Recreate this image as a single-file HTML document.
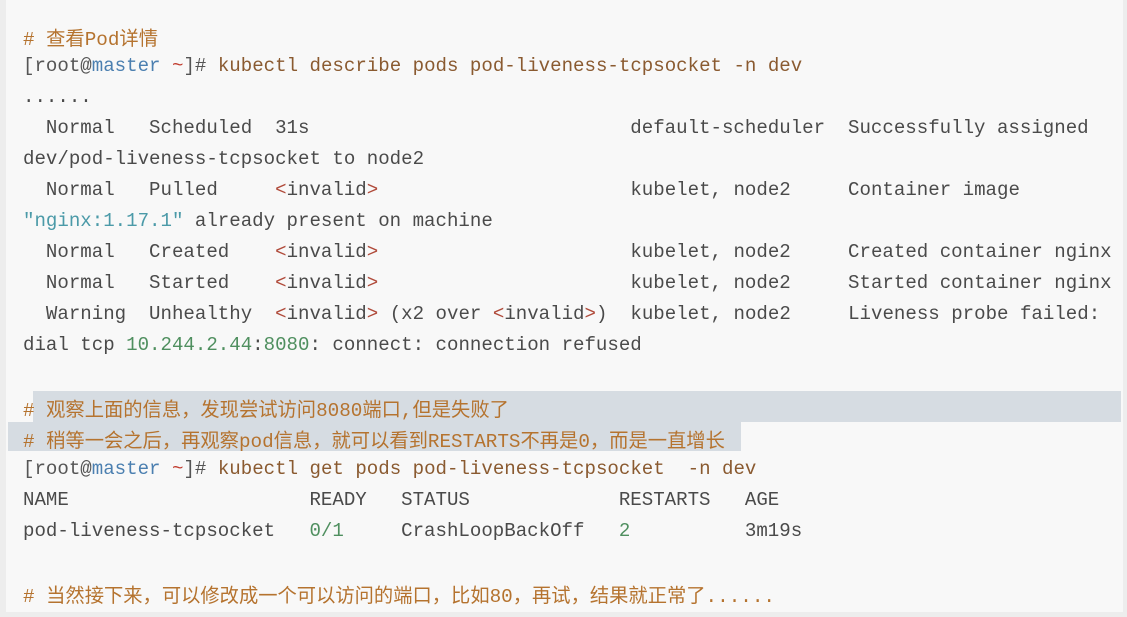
<!DOCTYPE html>
<html><head><meta charset="utf-8"><style>
html,body{margin:0;padding:0;}
body{width:1127px;height:617px;background:#ededed;overflow:hidden;position:relative;}
#panel{position:absolute;left:6px;top:0;width:1117px;height:612px;background:#f8f8f8;}
.hl{position:absolute;background:#d6dce2;}
.l{position:absolute;left:23px;white-space:pre;font-family:"Liberation Mono",monospace;font-size:19.1px;color:#4a4a4a;}
.c{color:#b5732f;font-family:"Liberation Mono","Noto Sans CJK SC",monospace;font-size:19.3px;}
.p{color:#555;}
.m{color:#4b7fb0;}
.t{color:#c0392b;}
.k{color:#8a5a30;}
.s{color:#4b9aa8;}
.n{color:#4f8f5f;}
.r{color:#b04a3a;}
</style></head><body>
<div id="panel"></div>
<div class="hl" style="left:33px;top:391px;width:1088px;height:31px"></div>
<div class="hl" style="left:8px;top:422px;width:733px;height:29px"></div>
<div class="l c" style="top:23px"># 查看Pod详情</div>
<div class="l" style="top:55px"><span class="p">[root@</span><span class="m">master</span> <span class="t">~</span><span class="p">]#</span> <span class="k">kubectl describe pods pod-liveness-tcpsocket -n dev</span></div>
<div class="l" style="top:86px">......</div>
<div class="l" style="top:117px">  Normal   Scheduled  31s                            default-scheduler  Successfully assigned</div>
<div class="l" style="top:148px">dev/pod-liveness-tcpsocket to node2</div>
<div class="l" style="top:179px">  Normal   Pulled     <span class="r">&lt;</span>invalid<span class="r">&gt;</span>                      kubelet, node2     Container image</div>
<div class="l" style="top:210px"><span class="s">"nginx:1.17.1"</span> already present on machine</div>
<div class="l" style="top:241px">  Normal   Created    <span class="r">&lt;</span>invalid<span class="r">&gt;</span>                      kubelet, node2     Created container nginx</div>
<div class="l" style="top:272px">  Normal   Started    <span class="r">&lt;</span>invalid<span class="r">&gt;</span>                      kubelet, node2     Started container nginx</div>
<div class="l" style="top:303px">  Warning  Unhealthy  <span class="r">&lt;</span>invalid<span class="r">&gt;</span> (x2 over <span class="r">&lt;</span>invalid<span class="r">&gt;</span>)  kubelet, node2     Liveness probe failed:</div>
<div class="l" style="top:334px">dial tcp <span class="n">10.244.2.44</span>:<span class="n">8080</span>: connect: connection refused</div>
<div class="l c" style="top:394px"># 观察上面的信息，发现尝试访问8080端口,但是失败了</div>
<div class="l c" style="top:425px"># 稍等一会之后，再观察pod信息，就可以看到RESTARTS不再是0，而是一直增长</div>
<div class="l" style="top:458px"><span class="p">[root@</span><span class="m">master</span> <span class="t">~</span><span class="p">]#</span> <span class="k">kubectl get pods pod-liveness-tcpsocket  -n dev</span></div>
<div class="l" style="top:489px">NAME                     READY   STATUS             RESTARTS   AGE</div>
<div class="l" style="top:520px">pod-liveness-tcpsocket   <span class="n">0/1</span>     CrashLoopBackOff   <span class="n">2</span>          3m19s</div>
<div class="l c" style="top:580px"># 当然接下来，可以修改成一个可以访问的端口，比如80，再试，结果就正常了......</div>
</body></html>
